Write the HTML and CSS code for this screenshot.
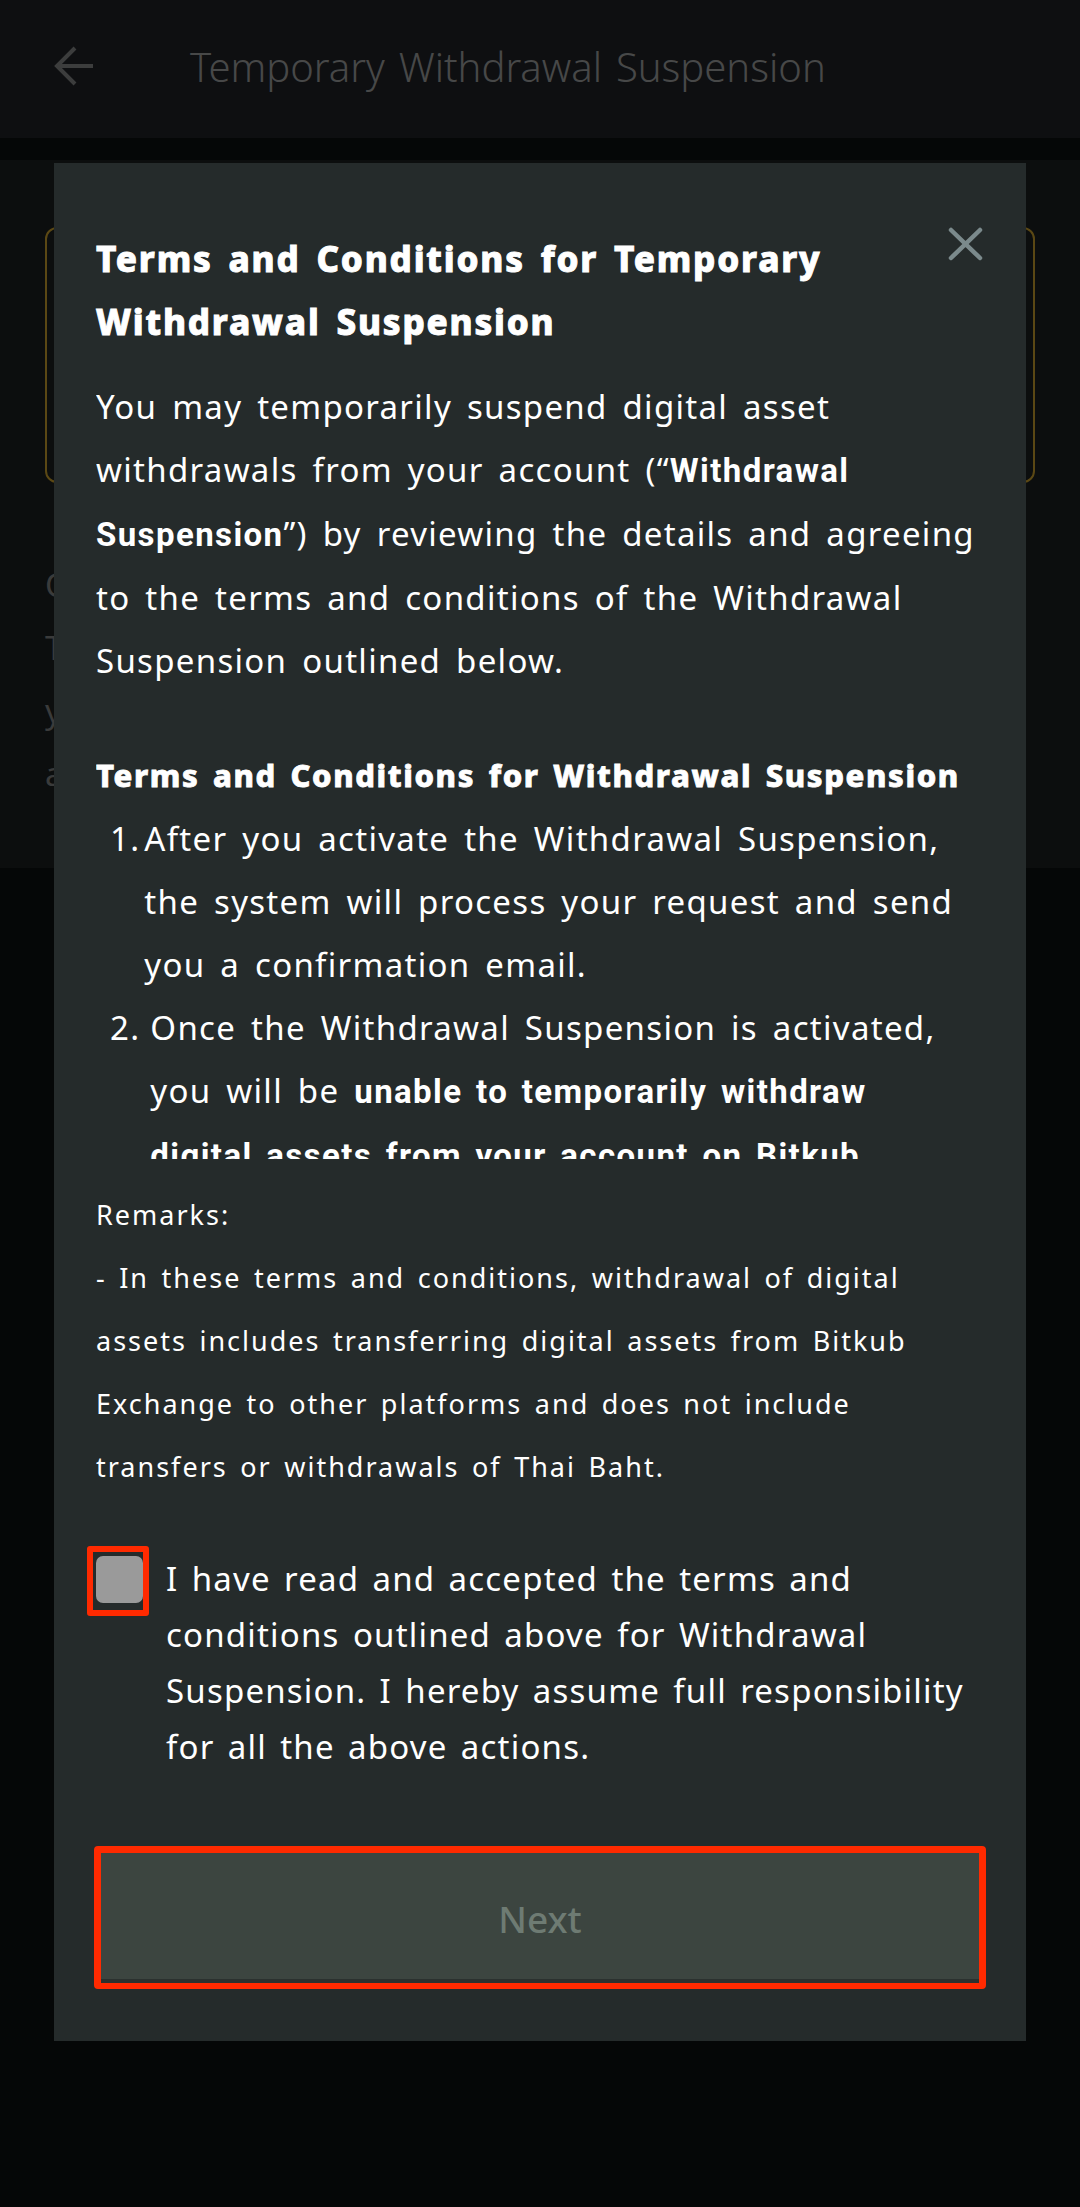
FILE: index.html
```html
<!DOCTYPE html>
<html lang="en">
<head>
<meta charset="utf-8">
<title>Temporary Withdrawal Suspension</title>
<link rel="stylesheet" href="styles.css">
</head>
<body>
<div class="app">
  <header class="topbar">
    <svg class="back" viewBox="0 0 42 42" aria-hidden="true">
      <path d="M40 21H4M22 3L4 21l18 18" fill="none" stroke="currentColor" stroke-width="4"/>
    </svg>
    <h1 class="topbar-title">Temporary Withdrawal Suspension</h1>
  </header>
  <div class="divider"></div>
  <main class="content">
    <div class="notice"></div>
    <p class="intro">Clicking the button below will temporarily suspend<br>The withdrawal of digital assets from your account.<br>your deposits and trading will not be affected<br>and you can cancel the suspension at any time.</p>
  </main>
</div>
<div class="overlay"></div>
<section class="modal">
  <button class="close" aria-label="Close">
    <svg viewBox="0 0 35 34" aria-hidden="true">
      <path d="M3 3L32 31M32 3L3 31" fill="none" stroke="currentColor" stroke-width="4.5" stroke-linecap="round"/>
    </svg>
  </button>
  <h2 class="modal-title">Terms and Conditions for Temporary Withdrawal Suspension</h2>
  <div class="scroll">
    <p class="lead">You may temporarily suspend digital asset withdrawals from your account (“<b>Withdrawal Suspension</b>”) by reviewing the details and agreeing to the terms and conditions of the Withdrawal Suspension outlined below.</p>
    <h3 class="sub">Terms and Conditions for Withdrawal Suspension</h3>
    <ol class="terms">
      <li><span class="num">1.</span><span class="item">After you activate the Withdrawal Suspension, the system will process your request and send you a confirmation email.</span></li>
      <li class="wide-num"><span class="num">2.</span><span class="item">Once the Withdrawal Suspension is activated, you will be <b>unable to temporarily withdraw digital assets from your account on Bitkub Exchange</b> until the suspension is cancelled.</span></li>
    </ol>
  </div>
  <div class="remarks">
    <p>Remarks:</p>
    <p>- In these terms and conditions, withdrawal of digital assets includes transferring digital assets from Bitkub Exchange to other platforms and does not include transfers or withdrawals of Thai Baht.</p>
  </div>
  <label class="agree">
    <span class="check-ring"><span class="check"></span></span>
    <span class="agree-text">I have read and accepted the terms and conditions outlined above for Withdrawal Suspension. I hereby assume full responsibility for all the above actions.</span>
  </label>
  <div class="next-ring"><button class="next">Next</button></div>
</section>
</body>
</html>
```

FILE: styles.css
```css
* { box-sizing: border-box; margin: 0; padding: 0; }
html, body { width: 1080px; height: 2207px; }
body {
  position: relative;
  overflow: hidden;
  background: #0d1212;
  font-family: "Noto Sans", "Open Sans", sans-serif;
}

/* page behind the dialog */
.topbar {
  height: 138px;
  background: #23262b;
  display: flex;
  align-items: center;
  padding: 0 0 6px 53px;
  color: #969898;
}
.back { width: 42px; height: 42px; margin-right: 95px; flex: none; }
.topbar-title {
  font-size: 40px;
  font-weight: 300;
  color: #b2b4b4;
  word-spacing: 3.5px;
}
.divider { height: 22px; }
.content {
  height: 708px;
  background: #1e2323;
  padding: 67px 45px 0;
}
.notice {
  height: 256px;
  border: 2px solid #e3b432;
  border-radius: 12px;
}
.intro {
  margin-top: 70px;
  font-size: 33px;
  line-height: 63px;
  color: #919494;
  white-space: nowrap;
}
.overlay {
  position: absolute;
  inset: 0;
  background: rgba(0, 0, 0, 0.6);
}

/* dialog */
.modal {
  position: absolute;
  left: 54px;
  top: 163px;
  width: 972px;
  height: 1878px;
  background: #252b2b;
  padding: 64px 42px 0;
  color: #fff;
}
.close {
  position: absolute;
  top: 64px;
  right: 43px;
  width: 35px;
  height: 34px;
  border: 0;
  background: none;
  color: #7b8a8c;
}
.close svg { display: block; width: 35px; height: 34px; }
.modal-title {
  font-size: 35px;
  font-weight: 800;
  line-height: 63px;
  letter-spacing: 1.8px;
  word-spacing: 5px;
  padding-right: 70px;
  -webkit-text-stroke: 0.9px #fff;
}
.scroll {
  margin-top: 22px;
  height: 784px;
  overflow: hidden;
}
.lead {
  font-size: 33px;
  line-height: 63px;
  letter-spacing: 1.3px;
  word-spacing: 5px;
}
.lead b, .terms b {
  font-family: Roboto, "Noto Sans", sans-serif;
  font-weight: 700;
  letter-spacing: 1.4px;
  word-spacing: 4px;
}
.sub {
  margin-top: 52px;
  font-size: 31px;
  font-weight: 800;
  line-height: 63px;
  letter-spacing: 1.6px;
  word-spacing: 4px;
  -webkit-text-stroke: 0.8px #fff;
}
.terms {
  list-style: none;
  font-size: 33px;
  line-height: 63px;
  letter-spacing: 1.3px;
  word-spacing: 5px;
  padding-right: 22px;
}
.terms li {
  display: flex;
  gap: 4px;
  padding-left: 14px;
}
.terms li.wide-num { gap: 10px; }
.num { flex: none; }
.remarks {
  margin-top: 24px;
  font-size: 27px;
  line-height: 63px;
  letter-spacing: 2px;
  word-spacing: 3.5px;
}
.agree {
  margin: 48px 0 0 -9px;
  display: flex;
  align-items: flex-start;
  gap: 17px;
}
.check-ring {
  flex: none;
  border: 6px solid #ff2a00;
  border-radius: 3px;
  padding: 4px 0 7px 3px;
}
.check {
  display: block;
  width: 47px;
  height: 47px;
  border-radius: 7px;
  background: #9a9a9a;
}
.agree-text {
  margin-top: 5px;
  font-size: 33px;
  line-height: 56px;
  letter-spacing: 1.2px;
  word-spacing: 3.5px;
}
.next-ring {
  margin: 71px 0 0 -2px;
  width: 892px;
  border: 7px solid #ff2a00;
  border-bottom-width: 6px;
  border-radius: 4px;
}
.next {
  display: block;
  width: 100%;
  height: 130px;
  border: 0;
  background: #3c4540;
  box-shadow: inset 0 -4px 0 #2b312f;
  font-family: "Noto Sans", "Open Sans", sans-serif;
  font-size: 37px;
  font-weight: 500;
  color: #6e7b73;
}
```
